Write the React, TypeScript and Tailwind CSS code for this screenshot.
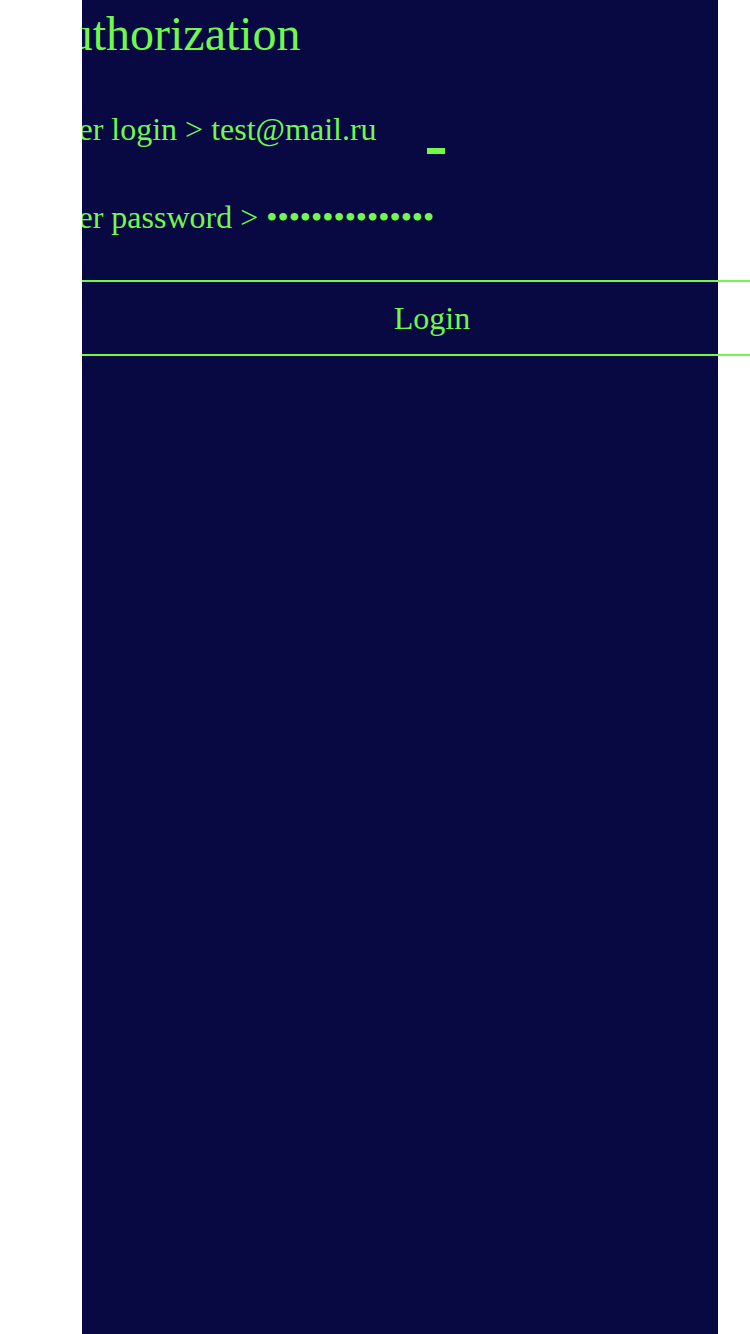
import React from 'react';

const green = 'text-[#72f84b]';

export default function App() {
  return (
    <div
      className="flex h-[1334px] w-[750px] overflow-hidden bg-white"
      style={{ fontFamily: '"Liberation Serif", "Times New Roman", serif' }}
    >
      <div className="w-[82px] shrink-0" />
      <div className="h-full w-[668px] shrink-0 overflow-hidden">
        <div className="h-full w-[636px] bg-[#080842]">
          <div className={`-ml-[48px] w-[796px] ${green}`}>
            <h1 className="pt-[6px] text-[48px] leading-[55px]">Authorization</h1>

            <div className="mt-[50px] flex items-end text-[32px] leading-[37px]">
              <span>Enter login &gt; test@mail.ru</span>
              <span className="mb-[-6px] ml-[50px] h-[6px] w-[18px] bg-[#72f84b]" />
            </div>

            <div className="mt-[51px] text-[32px] leading-[37px]">
              Enter password &gt; •••••••••••••••
            </div>

            <button className="mt-[44px] flex h-[76px] w-full items-center justify-center border-y-2 border-[#72f84b] text-[32px] leading-[37px]">
              Login
            </button>
          </div>
        </div>
      </div>
    </div>
  );
}
